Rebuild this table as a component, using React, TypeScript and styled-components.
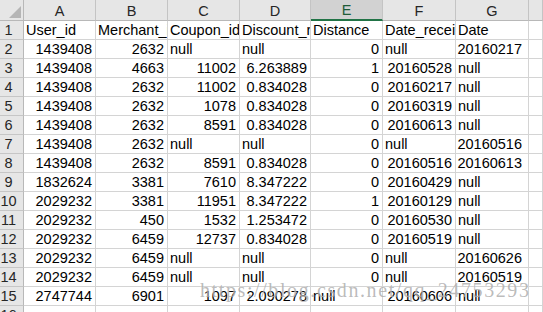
import React from 'react';
import styled, { createGlobalStyle } from 'styled-components';

const GlobalStyle = createGlobalStyle`
  html, body {
    margin: 0;
    padding: 0;
    background: #ffffff;
    overflow: hidden;
  }
`;

type Align = 'left' | 'right';
type CellValue = string | number;

const columns = ['A', 'B', 'C', 'D', 'E', 'F', 'G', ''];
const widths = [24, 72, 72, 72, 71, 72, 73, 73];
const activeColumn = 'E';

const rows: CellValue[][] = [
  ['User_id', 'Merchant_id', 'Coupon_id', 'Discount_rate', 'Distance', 'Date_received', 'Date'],
  [1439408, 2632, 'null', 'null', 0, 'null', 20160217],
  [1439408, 4663, 11002, '6.263889', 1, 20160528, 'null'],
  [1439408, 2632, 11002, '0.834028', 0, 20160217, 'null'],
  [1439408, 2632, 1078, '0.834028', 0, 20160319, 'null'],
  [1439408, 2632, 8591, '0.834028', 0, 20160613, 'null'],
  [1439408, 2632, 'null', 'null', 0, 'null', 20160516],
  [1439408, 2632, 8591, '0.834028', 0, 20160516, 20160613],
  [1832624, 3381, 7610, '8.347222', 0, 20160429, 'null'],
  [2029232, 3381, 11951, '8.347222', 1, 20160129, 'null'],
  [2029232, 450, 1532, '1.253472', 0, 20160530, 'null'],
  [2029232, 6459, 12737, '0.834028', 0, 20160519, 'null'],
  [2029232, 6459, 'null', 'null', 0, 'null', 20160626],
  [2029232, 6459, 'null', 'null', 0, 'null', 20160519],
  [2747744, 6901, 1097, '2.090278', 'null', 20160606, 'null'],
  ['', '', '', '', '', '', ''],
];

const isNumeric = (v: CellValue) => v !== '' && !isNaN(Number(v));

const Sheet = styled.div`
  position: relative;
  display: grid;
  grid-template-columns: ${widths.map((w) => `${w}px`).join(' ')} 1fr;
  grid-auto-rows: 19px;
  grid-template-rows: 21px;
  width: 543px;
  height: 312px;
  overflow: hidden;
  font-family: 'Liberation Sans', Arial, sans-serif;
  font-size: 14.5px;
  color: #000000;
`;

const Corner = styled.div`
  position: relative;
  background: #e6e6e6;
  border-right: 1px solid #b8b8b8;
  border-bottom: 1px solid #b8b8b8;
  box-sizing: border-box;
`;

const CornerMark = styled.div`
  position: absolute;
  right: 2px;
  bottom: 2px;
  width: 0;
  height: 0;
  border-left: 12px solid transparent;
  border-bottom: 12px solid #b5b5b5;
`;

const ColHeader = styled.div<{ $active?: boolean }>`
  display: flex;
  align-items: flex-end;
  justify-content: center;
  box-sizing: border-box;
  padding-bottom: 2px;
  line-height: 14px;
  background: ${(p) => (p.$active ? '#d2d2d2' : '#e6e6e6')};
  color: ${(p) => (p.$active ? '#1f5c38' : '#262626')};
  border-right: 1px solid #c4c4c4;
  border-bottom: ${(p) => (p.$active ? '2px solid #217346' : '1px solid #b8b8b8')};
`;

const RowHeader = styled.div`
  display: flex;
  align-items: flex-end;
  justify-content: center;
  box-sizing: border-box;
  padding-right: 6px;
  padding-bottom: 2px;
  line-height: 14px;
  background: #e6e6e6;
  color: #262626;
  border-right: 1px solid #b8b8b8;
  border-bottom: 1px solid #c6c6c6;
`;

const Cell = styled.div<{ $align: Align; $pad: number }>`
  display: flex;
  align-items: flex-end;
  justify-content: ${(p) => (p.$align === 'right' ? 'flex-end' : 'flex-start')};
  box-sizing: border-box;
  padding: 0 ${(p) => (p.$align === 'right' ? p.$pad : 0)}px 2px
    ${(p) => (p.$align === 'left' ? p.$pad : 0)}px;
  line-height: 14px;
  white-space: nowrap;
  overflow: hidden;
  border-right: 1px solid #d4d4d4;
  border-bottom: 1px solid #d4d4d4;
`;

const Watermark = styled.div`
  position: absolute;
  left: 200px;
  top: 280px;
  font-family: 'Liberation Serif', 'Times New Roman', serif;
  font-size: 20px;
  line-height: 20px;
  letter-spacing: 1.6px;
  white-space: nowrap;
  color: rgba(130, 130, 130, 0.55);
  text-shadow: 0 0 1px rgba(255, 255, 255, 0.7);
  pointer-events: none;
`;

export default function App() {
  return (
    <>
      <GlobalStyle />
      <Sheet>
        <Corner>
          <CornerMark />
        </Corner>
        {columns.map((c, i) => (
          <ColHeader key={i} $active={c === activeColumn}>
            {c}
          </ColHeader>
        ))}
        {rows.map((row, r) => (
          <React.Fragment key={r}>
            <RowHeader>{r + 1}</RowHeader>
            {row.map((v, c) => {
              const numeric = isNumeric(v) && r > 0;
              const pad = numeric && c === 6 ? 6 : numeric ? 3 : 2;
              return (
                <Cell key={c} $align={numeric ? 'right' : 'left'} $pad={pad}>
                  {v}
                </Cell>
              );
            })}
            <Cell $align="left" $pad={2} />
          </React.Fragment>
        ))}
        <Watermark>https://blog.csdn.net/qq_24753293</Watermark>
      </Sheet>
    </>
  );
}
